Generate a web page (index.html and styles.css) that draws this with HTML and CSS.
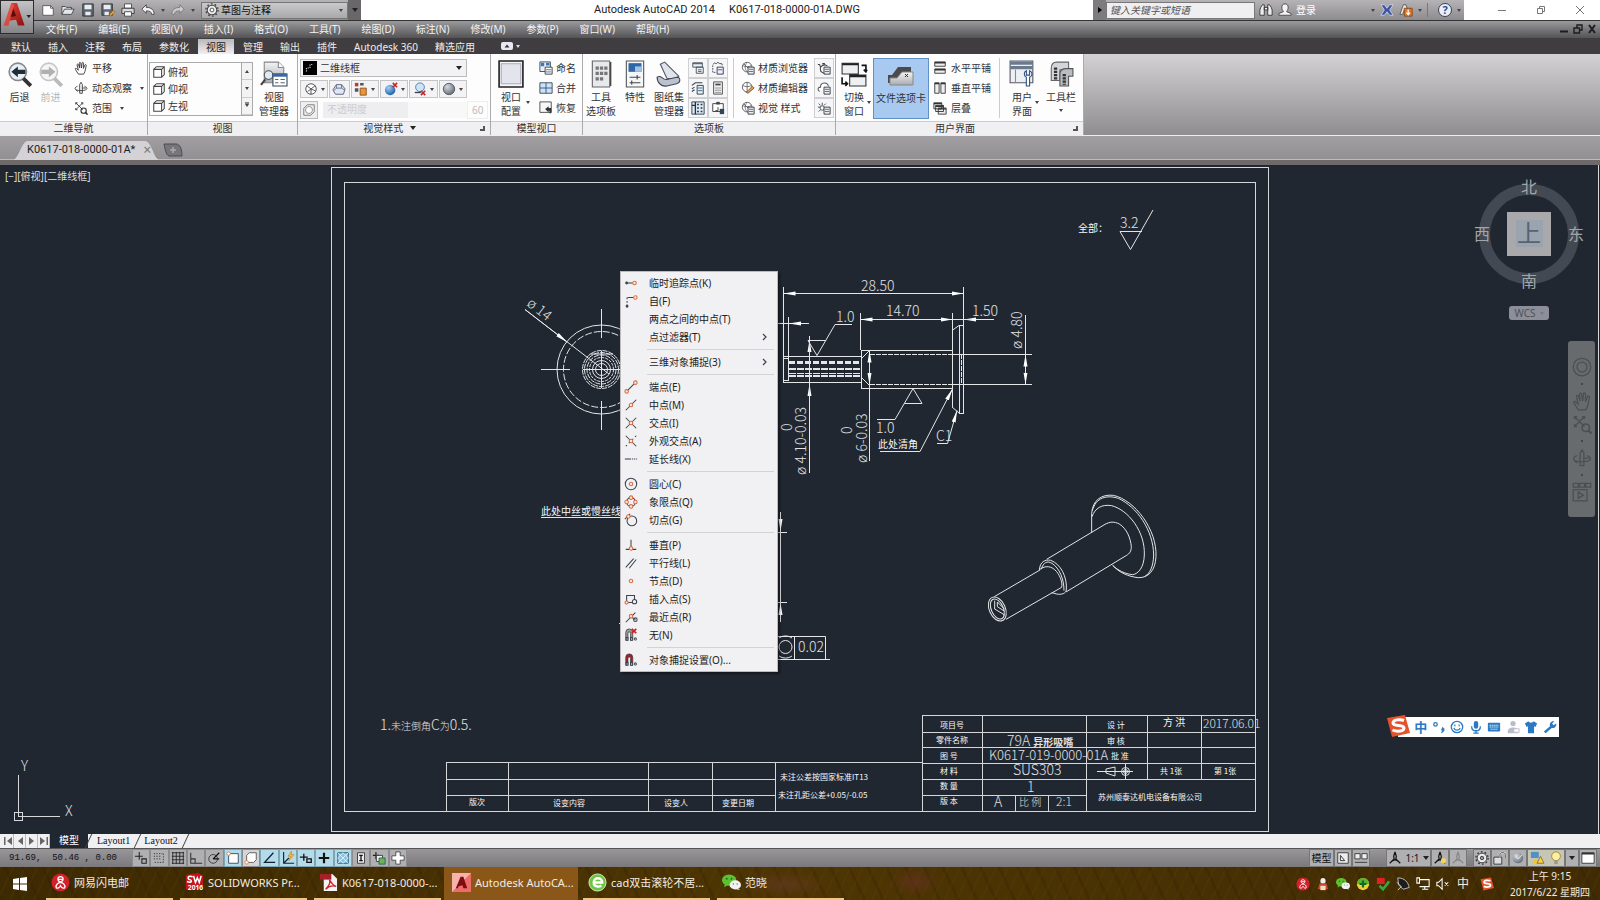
FILE: index.html
```html
<!DOCTYPE html>
<html lang="zh-CN">
<head>
<meta charset="utf-8">
<title>Autodesk AutoCAD 2014 K0617-018-0000-01A.DWG</title>
<link rel="stylesheet" href="styles.css">
</head>
<body>
<svg class="defs" aria-hidden="true">
  <defs>
    <linearGradient id="gGrey" x1="0" y1="0" x2="0" y2="1"><stop offset="0" stop-color="#f4f4f6"/><stop offset="1" stop-color="#a9abb0"/></linearGradient>
    <linearGradient id="gRed" x1="0" y1="0" x2="1" y2="1"><stop offset="0" stop-color="#ee4a3c"/><stop offset="1" stop-color="#8d0f10"/></linearGradient>
    <radialGradient id="gBlue" cx=".35" cy=".3" r=".8"><stop offset="0" stop-color="#9fd0f5"/><stop offset="1" stop-color="#1456a0"/></radialGradient>
    <radialGradient id="gBall" cx=".35" cy=".3" r=".8"><stop offset="0" stop-color="#d5dae0"/><stop offset="1" stop-color="#59636e"/></radialGradient>
    <marker id="arrow" markerUnits="userSpaceOnUse" markerWidth="14" markerHeight="8" refX="12" refY="3" orient="auto-start-reverse"><path d="M12 3 0 1V5Z" fill="#fff"/></marker>
    <symbol id="cube" viewBox="0 0 16 16"><path d="M2 5h9v9H2zM5 2h9v9M2 5l3-3M11 5l3-3M11 14l3-3" fill="#fff" stroke="#444" stroke-width="1.2"/></symbol>
    <symbol id="list" viewBox="0 0 16 16"><path d="M2 2h11v5H2zM6 7h8v7H6z" fill="#eef1f5" stroke="#444b55"/><path d="M2 3h11M8 10h4M8 12h4" stroke="#4d6f95" stroke-width="1.4"/></symbol>
    <symbol id="globe" viewBox="0 0 16 16"><circle cx="7" cy="7" r="5.500" fill="#fff" stroke="#555"/><path d="M2 5c3 2 7 2 10 0M7 1.500C4 5 4 9 7 12.500M3 3l8 8" stroke="#666" fill="none"/><path d="M8 7h7v8H8z" fill="#e8eef5" stroke="#333"/><path d="M9 9.500h5M9 12h5" stroke="#46698f"/></symbol>
    <symbol id="magnet" viewBox="0 0 16 16"><path d="M2 14V5a4 4 0 0 1 8 0v9H7.500V6a1.500 1.500 0 0 0-3 0v8Z" fill="currentColor" stroke="#333" stroke-width=".8"/><path d="M2.500 11h2v3h-2zM7.500 11h2v3h-2z" fill="#fff"/><circle cx="13" cy="12.500" r="1.200" fill="none" stroke="#555"/></symbol>
    <symbol id="hand" viewBox="0 0 16 16"><path d="M5 15 1.500 9.500c-.5-1 .8-1.700 1.500-.8L5 10.500 3.500 4.500c-.2-1 1.200-1.500 1.600-.4L6.500 8 6 2.500c0-1.200 1.500-1.200 1.700 0L8.500 8l.7-5.800c.2-1 1.500-.9 1.600.2L10.700 8.500 12.500 4.500c.5-1 1.700-.4 1.500.6L12.500 12l-1.500 3Z" fill="none" stroke="currentColor"/></symbol>
    <symbol id="extent" viewBox="0 0 16 16"><path d="M2 2l8 8M10 2 2 10M2 4V2h2M8 2h2v2M2 8v2h2" fill="none" stroke="currentColor"/><circle cx="11" cy="11" r="3" fill="none" stroke="currentColor" stroke-width="1.300"/><path d="m13 13 2.500 2.500" stroke="currentColor" stroke-width="1.800"/></symbol>
    <symbol id="orbit" viewBox="0 0 16 16"><path d="M6.500 14V4L8 1.500 9.500 4v10ZM4 6C-1 8 1 11 8 11s9-3 4-5M4 12l-2-2M9.500 8h4" fill="none" stroke="currentColor"/></symbol>
    <symbol id="scale" viewBox="0 0 16 16"><path d="M8 1 6.500 6 7 9 2 14M8 1l1.500 5L9 9l5 5M5 11.500c2-2 4-2 6 0" fill="none" stroke="currentColor" stroke-width="1.400"/></symbol>
    <symbol id="wechat" viewBox="0 0 20 18"><ellipse cx="7.500" cy="6.500" rx="7.500" ry="6" fill="#5cc32f"/><path d="m3 11-1 3 4-2Z" fill="#5cc32f"/><circle cx="5" cy="5" r="1" fill="#264"/><circle cx="10" cy="5" r="1" fill="#264"/><ellipse cx="14" cy="11.500" rx="6" ry="4.800" fill="#f3f3f3"/><path d="m17 15 2 2-4-1Z" fill="#eee"/><circle cx="12" cy="10.500" r=".8" fill="#777"/><circle cx="16" cy="10.500" r=".8" fill="#777"/></symbol>
    <symbol id="mail" viewBox="0 0 18 18"><circle cx="9" cy="9" r="8.500" fill="#d3212b"/><path d="M9 3.500c-3 0-3.500 4 0 5 3.500-1 3-5 0-5ZM5 14c-1-3 2-5 4-5s5 2 4 5c-1 1-3 0-4-2-1 2-3 3-4 2ZM7 6h4" stroke="#fff" stroke-width="1.200" fill="none"/></symbol>
    <symbol id="sogou" viewBox="0 0 24 22"><path d="m1 3 18-3 5 18-18 4Z" fill="#e5532b"/><path d="M18 5.500C14 4 7 4.500 7 8c0 4 11 1 11 5 0 3.500-7 4-11.500 2" stroke="#fff" stroke-width="3" fill="none"/></symbol>
  </defs>
</svg>

<header class="title-bar">
  <button class="app-button" aria-label="应用程序菜单">
    <svg viewBox="0 0 34 34"><path d="M3 26 11 2h6l8 24h-7l-2-6-7 1-1 5Z" fill="url(#gRed)"/><path d="m13 8-3 9 6-1Z" fill="#5d0a0a"/><path d="M3 26 11 2l3 2-6 22Z" fill="#f26a5b" opacity=".5"/><path d="M27 15h5l-2.500 3Z" fill="#222"/></svg>
  </button>
  <div class="quick-access">
    <button aria-label="新建"><svg viewBox="0 0 16 16"><path d="M2 3h9l3 3v8H2z" fill="#fff" stroke="#555"/><path d="M11 3v3h3" fill="none" stroke="#555"/></svg></button>
    <button aria-label="打开"><svg viewBox="0 0 16 16"><path d="M1 13V4h4l1 1h6v2M1 13 4 7h11l-3 6Z" fill="#e2e6ea" stroke="#444"/></svg></button>
    <button aria-label="保存"><svg viewBox="0 0 16 16"><path d="M2 1h12v14H2z" fill="#5d6672" stroke="#333"/><path d="M4 2h8v5H4zM5 10h6v4H5z" fill="#e9edf1"/></svg></button>
    <button aria-label="另存为"><svg viewBox="0 0 16 16"><path d="M1 1h12v13H1z" fill="#5d6672" stroke="#333"/><path d="M3 2h8v5H3zM4 10h5v4H4z" fill="#e9edf1"/><path d="m9 14 5-6 2 2-5 5Z" fill="#eba13a" stroke="#7a4a11" stroke-width=".6"/></svg></button>
    <button aria-label="打印"><svg viewBox="0 0 16 16"><path d="M4 1h8v5H4z" fill="#fff" stroke="#444"/><path d="M1 6h14v6H1z" fill="#d5d8dc" stroke="#333"/><path d="M4 10h8v5H4z" fill="#fff" stroke="#444"/></svg></button>
    <button aria-label="放弃"><svg viewBox="0 0 16 16"><path d="m1 7 5-5v3c6 0 9 3 9 8h-3c0-3-2-4-6-4v3Z" fill="#f2f2f2" stroke="#444"/></svg></button>
    <i class="caret"></i>
    <button aria-label="重做"><svg viewBox="0 0 16 16"><path d="m15 7-5-5v3C4 5 1 8 1 13h3c0-3 2-4 6-4v3Z" fill="#c9c9cb" stroke="#777"/></svg></button>
    <i class="caret"></i>
    <label class="workspace">
      <svg viewBox="0 0 16 16"><circle cx="8" cy="8" r="5.500" fill="#eee" stroke="#444" stroke-width="1.200"/><circle cx="8" cy="8" r="7" fill="none" stroke="#444" stroke-width="1.500" stroke-dasharray="2 2.400"/><circle cx="8" cy="8" r="2.200" fill="#fff" stroke="#444"/></svg>
      <select aria-label="工作空间"><option>草图与注释</option></select>
      <i class="caret"></i>
    </label>
    <button class="qat-more" aria-label="自定义"><i class="caret dark"></i></button>
  </div>
  <div class="caption"><span>Autodesk AutoCAD 2014</span><span>K0617-018-0000-01A.DWG</span></div>
  <div class="info-center">
    <button class="info-toggle" aria-label="展开"><svg viewBox="0 0 8 8"><path d="M2 1v6l4-3Z"/></svg></button>
    <input type="text" aria-label="搜索" placeholder="键入关键字或短语">
    <button aria-label="搜索"><svg viewBox="0 0 16 16"><path d="M2 5 4 2h2v12H1V8ZM14 5l-2-3h-2v12h5V8ZM6 5h4v3H6Z" fill="#e9ecef" stroke="#333"/></svg></button>
    <button class="sign-in"><svg viewBox="0 0 16 16"><path d="M8 1c5 0 4 7 2 8v1l5 2v2H1v-2l5-2V9C4 8 3 1 8 1Z" fill="#f3f3f3" stroke="#444"/></svg>登录</button>
    <i class="caret push"></i>
    <button aria-label="Exchange"><svg viewBox="0 0 16 16"><path d="M1 2h4l3 4 3-4h4l-4 6 4 6h-4l-3-4-3 4H1l4-6Z" fill="#3b55a4" stroke="#e5e8f5" stroke-width=".8"/></svg></button>
    <button aria-label="通知"><svg viewBox="0 0 16 16"><path d="M1 13 5 2h3l2 6H6l-2 5Z" fill="#e8e8ea" stroke="#555"/><path d="M6 6h9v9H6z" fill="#e0782a" stroke="#8c4510"/><path d="M10.500 7.500v6m-2-2.500 2 2.500 2-2.500" stroke="#fff" fill="none" stroke-width="1.300"/></svg></button>
    <i class="caret"></i>
    <i class="divider"></i>
    <button aria-label="帮助" class="help">?</button>
    <i class="caret"></i>
  </div>
  <div class="window-buttons">
    <button aria-label="最小化"><svg viewBox="0 0 10 10"><path d="M1 5.500h8"/></svg></button>
    <button aria-label="还原"><svg viewBox="0 0 10 10"><path d="M1.500 3.500h5v5h-5zM3.500 3V1.500h5v5H7"/></svg></button>
    <button aria-label="关闭"><svg viewBox="0 0 10 10"><path d="m1 1 8 8M9 1 1 9"/></svg></button>
  </div>
</header>

<nav class="menu-bar">
  <a href="#">文件(F)</a><a href="#">编辑(E)</a><a href="#">视图(V)</a><a href="#">插入(I)</a><a href="#">格式(O)</a><a href="#">工具(T)</a><a href="#">绘图(D)</a><a href="#">标注(N)</a><a href="#">修改(M)</a><a href="#">参数(P)</a><a href="#">窗口(W)</a><a href="#">帮助(H)</a>
  <div class="doc-buttons">
    <button aria-label="最小化文档"><svg viewBox="0 0 10 10"><path d="M1 7.500h8" stroke-width="2"/></svg></button>
    <button aria-label="还原文档"><svg viewBox="0 0 10 10"><path d="M1 4h5.500v5H1zM4 3.500V1h5v5H7" stroke-width="1.400"/></svg></button>
    <button aria-label="关闭文档"><svg viewBox="0 0 10 10"><path d="m2 1 6 8M8 1 2 9" stroke-width="2"/></svg></button>
  </div>
</nav>

<nav class="ribbon-tabs">
  <a href="#">默认</a><a href="#">插入</a><a href="#">注释</a><a href="#">布局</a><a href="#">参数化</a><a href="#" class="active">视图</a><a href="#">管理</a><a href="#">输出</a><a href="#">插件</a><a href="#">Autodesk 360</a><a href="#">精选应用</a>
  <button class="ribbon-min" aria-label="最小化功能区"><svg viewBox="0 0 20 10"><rect x="0" y="1" width="12" height="8" rx="2" fill="#e8e8f2"/><path d="M3.500 6.500 6 3.500l2.500 3Z" fill="#333"/><path d="M15 4h4l-2 3Z" fill="#ddd"/></svg></button>
</nav>

<main class="ribbon">
  <section class="panel p-nav">
    <div class="panel-body">
      <button class="big"><svg viewBox="0 0 24 24"><circle cx="10" cy="10" r="8" fill="#e6f0f6" stroke="#888" stroke-width="1.500"/><path d="m15 16 7 7" stroke="#333" stroke-width="3.500"/><path d="m4 10 6-5v3h7v4h-7v3Z" fill="#222b38"/></svg><span>后退</span></button>
      <button class="big off"><svg viewBox="0 0 24 24"><circle cx="10" cy="10" r="8" fill="#f5f5f5" stroke="#c6c6c6" stroke-width="1.500"/><path d="m15 16 7 7" stroke="#bbb" stroke-width="3.500"/><path d="m16 10-6-5v3H3v4h7v3Z" fill="#b0b0b0"/></svg><span>前进</span></button>
      <div class="rows nav-rows">
        <button><svg><use href="#hand"/></svg>平移</button>
        <button><svg><use href="#orbit"/></svg>动态观察<i class="caret"></i></button>
        <button><svg><use href="#extent"/></svg>范围<i class="caret"></i></button>
      </div>
    </div>
    <h2>二维导航</h2>
  </section>
  <section class="panel p-view">
    <div class="panel-body">
      <div class="view-list">
        <div class="rows">
          <button><svg><use href="#cube"/></svg>俯视</button>
          <button><svg><use href="#cube"/></svg>仰视</button>
          <button><svg><use href="#cube"/></svg>左视</button>
        </div>
        <div class="spin">
          <button aria-label="上"><i class="caret up"></i></button>
          <button aria-label="下"><i class="caret"></i></button>
          <button aria-label="更多"><i class="caret line"></i></button>
        </div>
      </div>
      <button class="big"><svg viewBox="0 0 24 24"><path d="M3 1h13l5 5v14H3z" fill="url(#gGrey)" stroke="#888"/><path d="M16 1v5h5" fill="#fff" stroke="#888"/><circle cx="7" cy="13" r="4" fill="#dcebf5" stroke="#555"/><path d="m4 17-4 5" stroke="#444" stroke-width="2"/><path d="M11 12h13v11H11z" fill="#fff" stroke="#345"/><path d="M11 13h13" stroke="#3a67a0" stroke-width="3"/><path d="M13 17h3m2 0h4m-9 3h3m2 0h4" stroke="#567"/></svg><span>视图<br>管理器</span></button>
    </div>
    <h2>视图</h2>
  </section>
  <section class="panel p-style">
    <div class="panel-body style-body">
      <label class="style-select"><svg viewBox="0 0 12 12"><path d="M0 0h12v12H0z"/><path d="M3 9V6h3V3h3" stroke="#ccc" fill="none" stroke-dasharray="1 1"/></svg><select aria-label="视觉样式"><option>二维线框</option></select><i class="caret dark"></i></label>
      <div class="strip">
        <button aria-label="无阴影"><svg viewBox="0 0 16 16"><circle cx="8" cy="8" r="6" fill="#fff" stroke="#444"/><path d="m8 8 5-4M8 8 3 4m5 4v6M4 11l4-3 5 2" stroke="#444" fill="none"/></svg><i class="caret"></i></button>
        <button aria-label="X 射线"><svg viewBox="0 0 16 16"><path d="M1 9 5 3h6l4 5-2 6H4Z" fill="#dde9f1" stroke="#557"/><path d="M5 3v4h6V3M5 7l-3 3M11 7l3 2" stroke="#668" fill="none"/></svg></button>
        <button aria-label="材质"><svg viewBox="0 0 16 16"><path d="M1 1h4v4H1z" fill="#c33"/><path d="M7 1h4v3H7zM1 7h4v4H1z" fill="#555"/><path d="M7 7h7v8H7z" fill="#e8963c" stroke="#8a4c12"/></svg><i class="caret"></i></button>
        <button aria-label="光源"><svg viewBox="0 0 16 16"><circle cx="7" cy="9" r="6" fill="url(#gBlue)"/><path d="m10 1 5 5m0-5-5 5" stroke="#c22" stroke-width="1.800"/></svg><i class="caret"></i></button>
        <button aria-label="背景"><svg viewBox="0 0 16 16"><circle cx="8" cy="6" r="5" fill="#cfe3f3" stroke="#3f78ab"/><path d="M2 12h7" stroke="#345" stroke-width="1.500"/><path d="m9 10 5 5m0-5-5 5" stroke="#c22" stroke-width="1.800"/></svg><i class="caret"></i></button>
        <button aria-label="面样式"><svg viewBox="0 0 16 16"><circle cx="8" cy="8" r="6.500" fill="url(#gBall)" stroke="#555"/></svg><i class="caret"></i></button>
      </div>
      <div class="opacity">
        <button aria-label="不透明度"><svg viewBox="0 0 16 16"><path d="M2 6 6 2h8v8l-4 4H2z" fill="#eee" stroke="#777"/><circle cx="8" cy="8" r="4" fill="#fff" stroke="#888"/></svg></button>
        <span class="track">不透明度</span><span class="value">60</span>
      </div>
    </div>
    <h2>视觉样式 <i class="caret dark"></i><i class="corner"></i></h2>
  </section>
  <section class="panel p-port">
    <div class="panel-body">
      <button class="big"><svg viewBox="0 0 24 24"><path d="M1 0h22v24H1z" fill="#f4f5f9" stroke="#222" stroke-width="1.500"/><path d="M3 2.500h18V21H3z" fill="#e4e5ec" stroke="#aab"/></svg><span>视口<br>配置</span></button>
      <i class="caret mid"></i>
      <div class="rows">
        <button><svg viewBox="0 0 16 16"><path d="M1 1h12v11H1z" fill="#e9f1f8" stroke="#345"/><path d="M2 2h4v4H2zM8 2h4v3H8z" fill="#3c78b4"/><path d="M7 7h8v8H7z" fill="#fff" stroke="#333"/><path d="M8 10h6M8 12.500h6" stroke="#46698f"/></svg>命名</button>
        <button><svg viewBox="0 0 16 16"><path d="M1 2h14v12H1z" fill="#cfe2f3" stroke="#345"/><path d="M8 2v12M1 8h14" stroke="#27518a"/></svg>合并</button>
        <button><svg viewBox="0 0 16 16"><path d="M1 1h13v12H1z" fill="#f4f6f8" stroke="#444"/><path d="m7 9 4-3v2h3v6h-2v-3h-1v2Z" fill="#333"/></svg>恢复</button>
      </div>
    </div>
    <h2>模型视口</h2>
  </section>
  <section class="panel p-palette">
    <div class="panel-body">
      <button class="big"><svg viewBox="0 0 24 24"><path d="M4 0h16v24H4z" fill="#e7e9ec" stroke="#666"/><path d="M7 5h3v3H7zM11 5h3v3h-3zM15 5h3v3h-3zM7 10h3v3H7zM11 10h3v3h-3zM15 10h3v3h-3zM7 15h3v3H7zM11 15h3v3h-3z" fill="#777"/><path d="M21 1v22" stroke="#222"/></svg><span>工具<br>选项板</span></button>
      <button class="big"><svg viewBox="0 0 24 24"><path d="M4 0h16v24H4z" fill="#f4f6f8" stroke="#555"/><path d="M6 2h12v8H6z" fill="#2f66a6"/><path d="M12 5h6v5h-6z" fill="#9fc3e6"/><path d="M7 15h10M7 20h10M14 13v4M9 18v4" stroke="#444"/></svg><span>特性</span></button>
      <button class="big"><svg viewBox="0 0 24 24"><path d="m4 3 4-2 13 13-4 3-7-1Z" fill="#dfe4ea" stroke="#556"/><path d="M1 15c4-3 5 3 9 2l9-2c4 0 4 5 0 6l-9 2C5 24 1 20 1 15Z" fill="#b9c2cd" stroke="#445"/></svg><span>图纸集<br>管理器</span></button>
      <div class="tiles two">
        <button aria-label="命令行"><svg><use href="#list"/></svg></button>
        <button aria-label="标记集"><svg viewBox="0 0 16 16"><path d="M2 4q2-3 4-1 2-3 4 0 3-1 3 2" fill="none" stroke="#345"/><path d="M2 5v8h4" stroke="#345" fill="none" stroke-dasharray="2 1"/><path d="M7 7h7v8H7z" fill="#eef" stroke="#333"/><path d="M8 10h5" stroke="#368"/></svg></button>
        <button aria-label="图层"><svg viewBox="0 0 16 16"><path d="m1 5 4-3h8M1 9l3-2M1 12l3-2" stroke="#345" fill="none" stroke-width="1.300"/><path d="M7 5h7v10H7z" fill="#e5edf6" stroke="#333"/><path d="M8 8h5M8 11h5" stroke="#368"/></svg></button>
        <button aria-label="计算器"><svg viewBox="0 0 16 16"><path d="M3 1h10v14H3z" fill="#f0f0f0" stroke="#444"/><path d="M5 4h6" stroke="#444" stroke-width="2"/><path d="M5 8h6M5 10.500h6M5 13h6" stroke="#555" stroke-dasharray="1.500 .8"/></svg></button>
        <button aria-label="设计中心"><svg viewBox="0 0 16 16"><path d="M1 1h14v14H1z" fill="#dfeaf5" stroke="#234"/><path d="M5 1v14M1 5h4M7 4h2m2 0h2M7 8h2m2 0h2M7 12h2m2 0h2" stroke="#234" stroke-width="1.500"/></svg></button>
        <button aria-label="参照"><svg viewBox="0 0 16 16"><path d="M2 3h12v9H2z" fill="#fff" stroke="#333"/><path d="M6 1h4v3H6z" fill="#444"/><path d="M8 7v4H5" stroke="#333" fill="none"/><path d="M10 9h5v6h-5z" fill="#345"/></svg></button>
      </div>
      <i class="vline"></i>
      <div class="rows material">
        <button><svg><use href="#globe"/></svg>材质浏览器</button>
        <button><svg viewBox="0 0 16 16"><circle cx="7" cy="7" r="5.500" fill="#fff" stroke="#555"/><path d="M2 5c3 2 7 2 10 0M7 1.500v11" stroke="#666" fill="none"/><path d="m6 13 7-7 2 2-7 6Z" fill="#e7a23d" stroke="#754"/></svg>材质编辑器</button>
        <button><svg><use href="#globe"/></svg>视觉 样式</button>
      </div>
      <div class="tiles">
        <button aria-label="渲染"><svg viewBox="0 0 16 16"><path d="M1 4h2l1 3c3-3 6-3 8-1M4 7c-1 4 0 6 4 7M6 3h3" stroke="#444" fill="none" stroke-width="1.200"/><path d="M8 7h7v8H8z" fill="#e8eef5" stroke="#333"/><path d="M9 9.500h5M9 12h5" stroke="#46698f"/></svg></button>
        <button aria-label="环境"><svg viewBox="0 0 16 16"><path d="M3 12c-3-2-2-5 1-5 0-6 8-6 9-1" stroke="#555" fill="#fff" stroke-width="1.200"/><path d="M8 7h7v8H8z" fill="#e8eef5" stroke="#333"/><path d="M9 9.500h5M9 12h5" stroke="#46698f"/></svg></button>
        <button aria-label="阳光"><svg viewBox="0 0 16 16"><path d="M6 2v3M1 7h3M2 3l2 2M10 3 8 5M2 12l2-2" stroke="#444"/><circle cx="6" cy="8" r="2.500" fill="#fff" stroke="#444"/><path d="M8 7h7v8H8z" fill="#e8eef5" stroke="#333"/><path d="M9 9.500h5M9 12h5" stroke="#46698f"/></svg></button>
      </div>
    </div>
    <h2>选项板</h2>
  </section>
  <section class="panel p-ui">
    <div class="panel-body">
      <button class="big"><svg viewBox="0 0 24 24"><path d="M1 2h15v10H1zM8 13h15v10H8z" fill="#eef0f3" stroke="#333"/><path d="M1 3h15M8 14h15" stroke="#222" stroke-width="2"/><path d="M19 4h4v6m-2-2 2 2 1-2M1 15v6h5m-2-2 2 2-2 2" stroke="#111" fill="none" stroke-width="1.500"/></svg><span>切换<br>窗口</span></button>
      <i class="caret mid"></i>
      <button class="big pressed"><svg viewBox="0 0 26 24"><path d="M0 20V12h4L10 4h13v16Z" fill="#4b4b4f"/><path d="M2 22v-7h7l5-6h11v13Z" fill="url(#gGrey)" stroke="#888"/><path d="m17 11 3 3m0-3-3 3" stroke="#333"/></svg><span>文件选项卡</span></button>
      <div class="rows">
        <button><svg viewBox="0 0 16 16"><path d="M2 1h12v5H2zM2 9h12v5H2z" fill="#eee" stroke="#333"/><path d="M2 2h12M2 10h12" stroke="#333" stroke-width="1.500"/></svg>水平平铺</button>
        <button><svg viewBox="0 0 16 16"><path d="M2 2h5v12H2zM9 2h5v12H9z" fill="#eee" stroke="#333"/><path d="M2 3h5m2 0h5" stroke="#333" stroke-width="1.500"/></svg>垂直平铺</button>
        <button><svg viewBox="0 0 16 16"><path d="M1 2h9v7H1zM3 5h9v7H3zM6 8h9v7H6z" fill="#eee" stroke="#333"/><path d="M1 3h9M3 6h9M6 9h9" stroke="#333" stroke-width="1.500"/></svg>层叠</button>
      </div>
      <i class="vline"></i>
      <button class="big"><svg viewBox="0 0 24 24"><path d="M1 0h21v20H1z" fill="#edf0f3" stroke="#556"/><path d="M1 2h21M1 6h21" stroke="#6a7a8c" stroke-width="3"/><path d="M6 8v12" stroke="#889"/><path d="M16 23v-8c-3-2-2-5 0-6v4h3V9c3 1 3 5 0 6v8Z" fill="#fff" stroke="#2c4f80"/></svg><span>用户<br>界面</span></button>
      <i class="caret mid"></i>
      <button class="big"><svg viewBox="0 0 24 24"><path d="M19 1H8C4 1 3 4 3 7v11h8V8h8Z" fill="#d3d5d9" stroke="#666"/><path d="M23 7h-6c-4 0-6 2-6 5v11h8V14h4Z" fill="#b9bcc1" stroke="#555"/><path d="M7 6v11M15 12v10" stroke="#333" stroke-width="3" stroke-dasharray="2 1"/></svg><span>工具栏</span><i class="caret"></i></button>
    </div>
    <h2>用户界面<i class="corner"></i></h2>
  </section>
</main>

<div class="file-tabs">
  <div class="file-tab"><svg class="tab-shape" viewBox="0 0 146 20" preserveAspectRatio="none"><path d="M0 20C6 18 8 3 14 1h118c7 1 8 16 14 19Z" fill="#d4d2d4"/></svg><a href="#">K0617-018-0000-01A*</a><button aria-label="关闭图形">×</button></div>
  <button class="new-tab" aria-label="新图形"><svg viewBox="0 0 20 14"><path d="M1 1h12c4 0 6 5 6 12H6C3 12 2 6 1 1Z" fill="#77757a" stroke="#4c4b4d"/><path d="M10 4v6M7 7h6" stroke="#aaa" stroke-width="1.500"/></svg></button>
</div>

<div class="canvas">
  <svg class="drawing" viewBox="0 165 1600 669">
    <g class="frame">
      <path d="M331.500 167.500H1268.500V831.500H331.500ZM344.500 182.500H1255.500V811.500H344.500Z"/>
      <path d="M446.500 811V762.500H922.500M446.500 779.500H775.500M446.500 795.500H775.500M508.500 762V811M648.500 762V811M712.500 762V811M775.500 762V811"/>
      <path d="M922.500 811V715.500H1255M922.500 732.500H1255M922.500 747.500H1255M922.500 763.500H1255M922.500 779.500H1255M922.500 795.500H1086.500M982.500 715V811M1086.500 715V811M1147.500 715V779M1201.500 715V779M1015.500 795V811M1048.500 795V811"/>
      <path d="M18.500 775V816.500H60M14.500 812.500h8v8h-8z"/>
    </g>
    <!-- end view -->
    <g class="line">
      <circle cx="601.500" cy="369.500" r="44.500"/>
      <circle cx="601.500" cy="369.500" r="38" stroke-dasharray="7 2"/>
      <g stroke-dasharray="5 1"><circle cx="601.500" cy="369.500" r="19"/><circle cx="601.500" cy="369.500" r="17"/><circle cx="601.500" cy="369.500" r="14.500"/></g>
      <circle cx="601.500" cy="369.500" r="12" stroke-dasharray="3 1"/><circle cx="601.500" cy="369.500" r="9"/><circle cx="601.500" cy="369.500" r="6"/>
      <path d="M601.500 309v29M601.500 351v37M601.500 401v29M541 369.500h29M583 369.500h37M590 354h23"/>
      <path d="M525 309.500 609 374"/><path d="M525 309.500 567 342" marker-end="url(#arrow)"/>
      <path d="M541 517.500h85M619 624l4-4"/>
    </g>
    <!-- side view -->
    <g class="line crisp">
      <path d="M783.500 287V382.500H861M783 356.500h78M788.500 317V381M783 358.500h6M783 380.500h6M963.500 287V413.500H959.500V325.500H963.500M860.500 313V350M861.500 350.500V388.500H952.500M861 350.500H952M952.500 313V407M952 354.500H1032M952 384.500H1032"/>
      <path d="M789 362.500h72" stroke-width="3" stroke-dasharray="6 2"/><path d="M789 369h72M789 375.500h72" stroke-width="2" stroke-dasharray="7 1"/><path d="M789 373.500h72" stroke-width="1" stroke-dasharray="7 1"/>
      <path d="M870 354.500h82M870 384.500h82M961.500 354v30" stroke-dasharray="5 1"/>
    </g>
    <g class="line">
      <path d="m861 359 8-8M861 377l8 8M952 330.500l7-5M952 407l7 6"/>
      <g marker-end="url(#arrow)"><path d="M870 293.500H963.500"/><path d="M870 293.500H783.500"/><path d="M900 319.500H860.500"/><path d="M900 319.500H952.500"/><path d="M994 319.500H964"/><path d="M809 323.500H789"/><path d="M869.500 365V350.500"/><path d="M869.500 365V385"/><path d="M1025.500 369V354.500"/><path d="M1025.500 369V384.500"/><path d="M809.500 400V384"/><path d="M809.500 360V340"/><path d="M920 451.500 952.500 389"/><path d="m947.500 443.500 9.500-33"/><path d="M780.500 512V531"/><path d="M780.500 622V603"/></g>
      <path d="M952 319.500h20M777 323.500h13M1025.500 315v40M869.500 385v76M809.500 336V473M808 340.500h18M808 340.500l9 15 18-31h17M904 403.500h18l-9-15-18 31H877M880 451.500h40M937 443.500h10.500"/>
      <path d="m1120 231.500 10.500 18L1153 210M1120 231.500h22"/>
      <path d="M780.500 530v75M777 532.500h10M777 602.500h10M777 636.500H825.500V659M794.500 636v23M777 659.500h53"/><circle cx="785.500" cy="647" r="6.500"/><path d="M779 638a11 11 0 0 1 13 0M779 656a11 11 0 0 0 13 0"/>
      <path d="M1097 771.500h36M1125.500 764v15M1115 767v9l-9-3v-4Z"/><circle cx="1125.500" cy="771.500" r="4"/><circle cx="1125.500" cy="771.500" r="2"/>
    </g>
    <!-- isometric view -->
    <g class="line iso" transform="translate(960 480) scale(.3333)">
      <path d="M395 158V100C398 60 425 42 460 46 525 60 592 150 588 230 586 272 565 294 535 293 505 290 478 278 458 256M397 92C408 52 440 44 475 55 530 80 580 150 581 225 580 260 570 280 555 289"/>
      <path d="M396 110C405 85 425 72 455 77 505 90 556 155 553 225 552 262 535 282 518 284 495 282 472 270 458 256M500 226C508 221 514 215 514 200 512 175 500 145 478 132 462 124 450 125 435 133L260 238"/>
      <path d="M238 270C240 245 255 238 272 241 302 252 322 290 319 330 318 340 305 345 290 342L275 338M244 268C250 246 262 242 276 250 298 265 312 295 312 332M240 268C255 256 275 257 290 275 302 290 308 310 305 322L138 418M103 350 240 270M318 336 500 226"/>
      <ellipse cx="112" cy="387" rx="24" ry="38" transform="rotate(-24 112 387)"/><ellipse cx="112" cy="387" rx="18" ry="32" transform="rotate(-24 112 387)"/><path d="M104 362v25l30 18M112 366l22 22M112 366v14l22 14"/>
    </g>
    <g class="cad">
      <text x="861" y="291">28.50</text><text x="886" y="316">14.70</text><text x="972" y="316">1.50</text><text x="836" y="322">1.0</text><text x="876" y="433">1.0</text><text x="936" y="441">C1</text><text x="798" y="652">0.02</text><text x="1120" y="228">3.2</text>
      <text transform="translate(526 305) rotate(38)">ø 14</text>
      <text transform="translate(1022 349) rotate(-90)">ø 4.80</text>
      <text transform="translate(806 475) rotate(-90)">ø 4.10-0.03</text><text transform="translate(792 431) rotate(-90)">0</text>
      <text transform="translate(867 463) rotate(-90)">ø 6-0.03</text><text transform="translate(852 434) rotate(-90)">0</text>
      <text x="380" y="730">1.<tspan class="c10">未注倒角</tspan>C<tspan class="c10">为</tspan>0.5.</text>
      <text x="1007" y="746">79A <tspan class="c10 solid">异形吸嘴</tspan></text><text class="c13" x="989" y="760">K0617-019-0000-01A</text><text x="1013" y="775">SUS303</text><text x="1027" y="792">1</text><text x="994" y="807">A</text><text class="c10" x="1019" y="806">比 例</text><text class="c12" x="1056" y="806">2:1</text><text class="c12" x="1203" y="728">2017.06.01</text>
      <text x="21" y="771">Y</text><text x="65" y="816">X</text>
    </g>
    <g class="cjk">
      <text class="c10" x="541" y="515">此处中丝或慢丝线</text><text class="c10" x="878" y="448">此处清角</text><text class="c10" x="1078" y="232">全部：</text><text class="c10" x="1163" y="726">方 洪</text>
      <text x="469" y="805">版次</text><text x="553" y="806">设变内容</text><text x="664" y="806">设变人</text><text x="722" y="806">变更日期</text>
      <text x="780" y="780">未注公差按国家标准IT13</text><text x="778" y="798">未注孔距公差+0.05/-0.05</text>
      <text x="940" y="728">项目号</text><text x="936" y="743">零件名称</text><text x="940" y="759">图 号</text><text x="940" y="774">材 料</text><text x="940" y="789">数 量</text><text x="940" y="804">版 本</text>
      <text x="1107" y="728">设 计</text><text x="1107" y="744">审 核</text><text x="1111" y="759">批 准</text><text x="1160" y="774">共 1张</text><text x="1214" y="774">第 1张</text><text x="1098" y="800">苏州顺泰达机电设备有限公司</text>
    </g>
  </svg>
  <div class="view-label"><button>[−]</button><button>[俯视]</button><button>[二维线框]</button></div>

  <svg class="view-cube" viewBox="0 0 114 114"><circle cx="57" cy="57" r="44.500"/><rect x="35" y="35" width="44" height="44"/><rect class="tint" x="44" y="43" width="27" height="27"/><text x="57" y="65" class="face">上</text><text x="57" y="16">北</text><text x="10" y="63">西</text><text x="104" y="63">东</text><text x="57" y="110">南</text></svg>
  <button class="wcs">WCS <i class="caret"></i></button>
  <div class="nav-bar">
    <button class="more" aria-label="全导航控制盘"><svg viewBox="0 0 16 16"><circle cx="8" cy="8" r="7" fill="none" stroke="currentColor"/><circle cx="8" cy="8" r="4" fill="none" stroke="currentColor"/></svg></button>
    <button aria-label="平移"><svg><use href="#hand"/></svg></button>
    <button class="more near" aria-label="范围缩放"><svg><use href="#extent"/></svg></button>
    <button class="more" aria-label="动态观察"><svg><use href="#orbit"/></svg></button>
    <button aria-label="ShowMotion"><svg viewBox="0 0 16 16"><path d="M1 1h4v3H1zM6 1h4v3H6zM11 1h4v3h-4zM1 6h11v9H1zM5 8v5l4-2.500Z" fill="none" stroke="currentColor"/></svg></button>
  </div>

  <div class="ime">
    <svg class="ime-logo"><use href="#sogou"/></svg>
    <button>中</button>
    <button aria-label="标点"><svg viewBox="0 0 16 16"><circle cx="4" cy="5" r="2" fill="none" stroke="currentColor" stroke-width="1.500"/><path d="M12 8.500c3 1 2 5-1 6 1-2 1-2 0-3Z" fill="currentColor" stroke="currentColor"/></svg></button>
    <button aria-label="表情"><svg viewBox="0 0 16 16"><circle cx="8" cy="8" r="6.500" fill="none" stroke="currentColor" stroke-width="1.500"/><path d="M5.500 5v2M10.500 5v2M4.500 9c1 3.500 6 3.500 7 0" fill="none" stroke="currentColor" stroke-width="1.400"/></svg></button>
    <button aria-label="语音"><svg viewBox="0 0 16 16"><rect x="5.500" y="1" width="5" height="9" rx="2.500" fill="currentColor"/><path d="M3 7c0 7 10 7 10 0M8 12v3M5 15h6" fill="none" stroke="currentColor" stroke-width="1.500"/></svg></button>
    <button aria-label="软键盘"><svg viewBox="0 0 16 16"><rect x="1" y="3" width="14" height="10" rx="1" fill="currentColor"/><path d="M3 6h10M3 8h10M4 10.500h8" stroke="#fff" stroke-dasharray="1.500 .7"/></svg></button>
    <button aria-label="登录" class="dim"><svg viewBox="0 0 16 16"><circle cx="8" cy="4" r="3" fill="currentColor"/><path d="M2 13c0-6 12-6 12 0v2H2Z" fill="currentColor"/><path d="M9 10h6v4H9z" fill="#fff" stroke="currentColor"/></svg></button>
    <button aria-label="皮肤"><svg viewBox="0 0 16 16"><path d="M1 4 5 1.500c1 2 5 2 6 0L15 4l-2 4-1.500-1V15h-7V7L3 8Z" fill="currentColor"/></svg></button>
    <button aria-label="工具箱"><svg viewBox="0 0 16 16"><path d="m1 13 7-6c-1-4 2-6 5-5.500L10.500 4 12 6l3-2c1 3-2 6-5 5l-7 6Z" fill="currentColor"/></svg></button>
  </div>

  <menu class="context">
    <li><button><svg viewBox="0 0 16 16"><path d="M3 8h7" /><circle cx="3" cy="8" r="1" fill="#333"/><circle class="o" cx="12" cy="8" r="2"/></svg>临时追踪点(K)</button></li>
    <li><button><svg viewBox="0 0 16 16"><path d="M4 4h7"/><path d="M3.500 4v10" stroke-dasharray="2 2"/><circle cx="3.500" cy="14" r="1" fill="#333"/><circle class="o" cx="13" cy="4" r="2"/></svg>自(F)</button></li>
    <li><button><svg></svg>两点之间的中点(T)</button></li>
    <li><button><svg></svg>点过滤器(T)<svg class="sub" viewBox="0 0 8 8"><path d="m2 1 3 3-3 3"/></svg></button></li>
    <li class="sep"></li>
    <li><button><svg></svg>三维对象捕捉(3)<svg class="sub" viewBox="0 0 8 8"><path d="m2 1 3 3-3 3"/></svg></button></li>
    <li class="sep"></li>
    <li><button><svg viewBox="0 0 16 16"><path d="m3 13 10-10"/><circle class="o" cx="3" cy="13" r="2"/><circle class="o" cx="13" cy="3" r="2"/></svg>端点(E)</button></li>
    <li><button><svg viewBox="0 0 16 16"><path d="M2 14 14 2"/><circle class="o" cx="8" cy="8" r="2"/></svg>中点(M)</button></li>
    <li><button><svg viewBox="0 0 16 16"><path d="M2 14 14 2M2 2l12 12"/><circle class="o" cx="8" cy="8" r="2"/></svg>交点(I)</button></li>
    <li><button><svg viewBox="0 0 16 16"><path d="M2 2l12 12"/><path d="M2 14 14 2" stroke-dasharray="2 3"/><circle class="o" cx="8" cy="8" r="2"/></svg>外观交点(A)</button></li>
    <li><button><svg viewBox="0 0 16 16"><path d="M1 8h7"/><path d="M9 8h6" stroke-dasharray="1.500 1"/></svg>延长线(X)</button></li>
    <li class="sep"></li>
    <li><button><svg viewBox="0 0 16 16"><circle cx="8" cy="8" r="6.500"/><circle class="o" cx="8" cy="8" r="2"/></svg>圆心(C)</button></li>
    <li><button><svg viewBox="0 0 16 16"><circle cx="8" cy="8" r="5"/><circle class="o" cx="8" cy="3" r="2"/><circle class="o" cx="8" cy="13" r="2"/><circle class="o" cx="3" cy="8" r="2"/><circle class="o" cx="13" cy="8" r="2"/></svg>象限点(Q)</button></li>
    <li><button><svg viewBox="0 0 16 16"><circle cx="9" cy="9" r="5.500"/><path d="M1 7 7 1"/><circle class="o" cx="5" cy="4" r="2"/></svg>切点(G)</button></li>
    <li class="sep"></li>
    <li><button><svg viewBox="0 0 16 16"><path d="M8 2v10M2 13h12"/><circle class="o" cx="8" cy="12" r="2"/></svg>垂直(P)</button></li>
    <li><button><svg viewBox="0 0 16 16"><path d="M2 13 11 3M6 14 14 4"/></svg>平行线(L)</button></li>
    <li><button><svg viewBox="0 0 16 16"><circle class="o" cx="8" cy="8" r="2"/></svg>节点(D)</button></li>
    <li><button><svg viewBox="0 0 16 16"><path d="M3 11V4h9v5"/><path d="M3 12h6"/><circle cx="12" cy="11" r="2.500"/><circle class="o" cx="3" cy="12" r="1.800"/></svg>插入点(S)</button></li>
    <li><button><svg viewBox="0 0 16 16"><path d="M2 14 13 3M8 8l5 3"/><circle class="o" cx="8" cy="7" r="2"/><circle cx="13" cy="11" r="2"/></svg>最近点(R)</button></li>
    <li><button><svg viewBox="0 0 16 16" color="#999"><use href="#magnet"/><path d="m9 1 5 5m0-5-5 5" stroke="#c22" stroke-width="2"/></svg>无(N)</button></li>
    <li class="sep"></li>
    <li><button><svg viewBox="0 0 16 16" color="#a8202a"><use href="#magnet"/></svg>对象捕捉设置(O)...</button></li>
  </menu>
</div>

<div class="layout-tabs">
  <button aria-label="首个"><svg viewBox="0 0 10 10"><path d="M1 1v8h1.500V1zM9 1v8L4 5Z"/></svg></button>
  <button aria-label="上一个"><svg viewBox="0 0 10 10"><path d="M8 1v8L3 5Z"/></svg></button>
  <button aria-label="下一个"><svg viewBox="0 0 10 10"><path d="M2 1v8l5-4Z"/></svg></button>
  <button aria-label="末个"><svg viewBox="0 0 10 10"><path d="M9 1v8H7.500V1zM1 1v8l5-4Z"/></svg></button>
  <a href="#" class="current">模型</a><a href="#">Layout1</a><a href="#">Layout2</a>
</div>

<div class="status-bar">
  <output>91.69,  50.46 , 0.00</output>
  <div class="toggles">
    <button aria-label="推断约束"><svg viewBox="0 0 16 16"><path d="M1 6h9M6 1v9M9 9h5v5H9z" stroke="#222" fill="none" stroke-width="1.200"/></svg></button>
    <button aria-label="捕捉"><svg viewBox="0 0 16 16"><path d="M2 3h10M2 6h8M2 9h8M13 3v10M3 13h10" stroke="#333" stroke-dasharray="1.500 1.500" fill="none"/></svg></button>
    <button aria-label="栅格"><svg viewBox="0 0 16 16"><path d="M1 2h14M1 6h14M1 10h14M1 14h14M2 1v14M6 1v14M10 1v14M14 1v14" stroke="#222"/></svg></button>
    <button aria-label="正交"><svg viewBox="0 0 16 16"><path d="M2 2v12h13M2 9h5v5" stroke="#333" fill="none" stroke-width="1.200"/></svg></button>
    <button aria-label="极轴"><svg viewBox="0 0 16 16"><circle cx="7" cy="9" r="5" stroke="#333" fill="none"/><path d="M7 9h7M7 9l7-7" stroke="#111" stroke-width="1.500"/></svg></button>
    <button class="on" aria-label="对象捕捉"><svg viewBox="0 0 16 16"><path d="M3 3h11v11H3z" fill="#fff" stroke="#345"/><circle cx="3" cy="3" r="2" fill="#fff" stroke="#e07b3c"/></svg></button>
    <button class="lite" aria-label="三维对象捕捉"><svg viewBox="0 0 16 16"><path d="M3 5 6 2h8v8l-3 3H3z" fill="#fff" stroke="#555"/><circle cx="3" cy="13" r="2" fill="#fff" stroke="#e07b3c"/></svg></button>
    <button class="on" aria-label="对象捕捉追踪"><svg viewBox="0 0 16 16"><path d="M13 2 3 13h12" stroke="#123" fill="none" stroke-width="1.500"/></svg></button>
    <button class="on" aria-label="动态 UCS"><svg viewBox="0 0 16 16"><path d="M3 1v13h12M3 14 9 8" stroke="#123" fill="none" stroke-width="1.300"/><path d="m12 0-4 6h3l-2 5 6-7h-3Z" fill="#f4b93a" stroke="#a66f13" stroke-width=".5"/></svg></button>
    <button class="on" aria-label="动态输入"><svg viewBox="0 0 16 16"><path d="M1 7h9M5.500 3v8M9 9h5v4H9z" stroke="#111" fill="none" stroke-width="1.500"/></svg></button>
    <button class="on" aria-label="线宽"><svg viewBox="0 0 16 16"><path d="M2 8h12M8 2v12" stroke="#111" stroke-width="2.500"/></svg></button>
    <button class="on" aria-label="透明度"><svg viewBox="0 0 16 16"><path d="M2 2h12v12H2z" fill="#8cc4e8" stroke="#256"/><path d="m2 8 6-6M2 14 14 2M8 14l6-6M2 8l6 6M2 2l12 12M8 2l6 6" stroke="#e4f3fb"/></svg></button>
    <button aria-label="快捷特性"><svg viewBox="0 0 16 16"><path d="M4 2h8v12H4z" fill="#eee" stroke="#333"/><path d="M6 5h4M6 11h4M8 5v6" stroke="#111" stroke-width="1.500"/></svg></button>
    <button aria-label="选择循环"><svg viewBox="0 0 16 16"><path d="M1 5h7M4.500 1v8" stroke="#222" stroke-width="1.300"/><path d="M5 5h7v7H5z" fill="#eee" stroke="#333"/><path d="M8 8h7v7H8z" fill="#6bb356" stroke="#265"/></svg></button>
    <button aria-label="注释监视器"><svg viewBox="0 0 16 16"><path d="M5.500 1h5v4.500H15v5h-4.500V15h-5v-4.500H1v-5h4.500Z" fill="#fff" stroke="#444"/></svg></button>
  </div>
  <div class="status-right">
    <button class="text">模型</button>
    <button aria-label="快速查看布局"><svg viewBox="0 0 16 16"><path d="M2 2h12v12H2z" fill="#eee" stroke="#333"/><path d="M5 5v6h5Z" fill="none" stroke="#222"/></svg></button>
    <button aria-label="快速查看图形"><svg viewBox="0 0 16 16"><path d="M1 3h6v6H1zM9 3h6v6H9zM1 13h14" fill="#eee" stroke="#333"/></svg></button>
    <button class="text anno"><svg><use href="#scale"/></svg>1:1 <i class="caret dark"></i></button>
    <button aria-label="注释可见性"><svg viewBox="0 0 16 16"><use href="#scale"/><circle cx="12" cy="11" r="3" fill="#f1d35d"/></svg></button>
    <button aria-label="自动添加比例" class="faded"><svg><use href="#scale"/></svg></button>
    <button class="apart" aria-label="切换工作空间"><svg viewBox="0 0 16 16"><circle cx="8" cy="8" r="5.500" fill="#eee" stroke="#333"/><circle cx="8" cy="8" r="7" fill="none" stroke="#333" stroke-width="1.500" stroke-dasharray="2 2.400"/><circle cx="8" cy="8" r="2" fill="#999" stroke="#333"/></svg></button>
    <button aria-label="锁定"><svg viewBox="0 0 16 16"><path d="M1 7h9v8H1z" fill="#ddd" stroke="#333"/><path d="M8 7V4c0-3 6-3 6 0v4" stroke="#eee" stroke-width="2" fill="none"/><path d="M8 7V4c0-3 6-3 6 0v4" stroke="#333" fill="none"/></svg></button>
    <button aria-label="硬件加速"><svg viewBox="0 0 16 16"><circle cx="8" cy="8" r="6" fill="url(#gBall)"/><path d="m5 5 3 4 5-5" stroke="#eee" fill="none"/></svg></button>
    <button class="wide" aria-label="隔离对象"><svg viewBox="0 0 16 16"><path d="M1 1h9v7H1z" fill="#4f92c8"/><path d="M4 9h5v5H4z" fill="#e9c93a"/><path d="m12 6 4 8H8Z" fill="#f5d433" stroke="#865"/></svg><svg viewBox="0 0 16 16"><circle cx="8" cy="6" r="5" fill="#fbf0a0" stroke="#988030"/><path d="M6 11h4v4H6z" fill="#999"/></svg></button>
    <button class="slim" aria-label="状态栏菜单"><i class="caret dark"></i></button>
    <button aria-label="全屏"><svg viewBox="0 0 16 16"><path d="M1 2h14v12H1z" fill="#fff" stroke="#333"/><path d="M1 3h14" stroke="#333" stroke-width="2"/></svg></button>
  </div>
</div>

<footer class="taskbar">
  <button class="start" aria-label="开始"><svg viewBox="0 0 14 14"><path d="M0 2 6 1v5.500H0zM7 1l7-1v6.500H7zM0 7.500h6V13l-6-1zM7 7.500h7V14l-7-1z" fill="#fff"/></svg></button>
  <button class="task t1"><svg><use href="#mail"/></svg><span>网易闪电邮</span></button>
  <button class="task t2"><svg viewBox="0 0 20 20"><path d="M1 2 14 0l5 3v11l-5 3H1z" fill="#c3161c"/><path d="M8 4c-5-2-6 2-3 3 3 1 2 4-3 2M9 3l2 7 2-5 2 5 2-7" stroke="#fff" fill="none" stroke-width="1.600"/><text x="3" y="18" font-size="7" font-weight="700" fill="#fff">2016</text></svg><span>SOLIDWORKS Pr...</span></button>
  <button class="task t3"><svg viewBox="0 0 20 20"><path d="M5 1h9l5 5v13H5z" fill="#f5f3f3"/><path d="M1 1h12v6H1z" fill="#a71f27"/><path d="M7 17C11 13 12 9 11 7c3 5 5 7 7 7-4-1-8 0-11 3Z" stroke="#c9252d" fill="none" stroke-width="1.500"/></svg><span>K0617-018-0000-...</span></button>
  <button class="task t4"><svg viewBox="0 0 20 20"><path d="M0 0h20v20H0z" fill="#ee6c68"/><path d="M0 0h20L0 20Z" fill="#f7b2ab"/><path d="M4 16 9 4h3l4 12h-4l-1-3-4 1-1 2Z" fill="#7e0d10"/></svg><span>Autodesk AutoCA...</span></button>
  <button class="task t5"><svg viewBox="0 0 20 20"><circle cx="10" cy="10" r="9" fill="#6cc644" stroke="#d8f0c5"/><path d="M5 10h10c0-6-9-6-9 0 0 5 6 5 8 3" stroke="#fff" fill="none" stroke-width="2.500"/></svg><span>cad双击滚轮不居...</span></button>
  <button class="task t6"><svg><use href="#wechat"/></svg><span>范晓</span></button>
  <div class="tray">
    <button aria-label="网易闪电邮"><svg><use href="#mail"/></svg></button>
    <button aria-label="QQ"><svg viewBox="0 0 16 16"><ellipse cx="8" cy="4.500" rx="3" ry="3.500" fill="#eee"/><path d="M4 7h8l2 7H2Z" fill="#c8452d"/><path d="M5 10h6v5H5z" fill="#f1ddc0"/></svg></button>
    <button aria-label="微信"><svg><use href="#wechat"/></svg></button>
    <button aria-label="安全卫士"><svg viewBox="0 0 16 16"><circle cx="8" cy="8" r="7" fill="#f2d32e"/><path d="M1 8a7 7 0 0 1 14 0Z" fill="#53b531"/><path d="M8 4v8M4 8h8" stroke="#163" stroke-width="2.500"/></svg></button>
    <button aria-label="SolidWorks"><svg viewBox="0 0 16 16"><path d="M1 1h9v7H1z" fill="#d22"/><path d="m4 10 4 4 7-9" stroke="#3ba53b" stroke-width="3" fill="none"/></svg></button>
    <button aria-label="卫星"><svg viewBox="0 0 16 16"><path d="M2 1c8 0 12 5 13 11L8 14 3 9Z" fill="#1c1c1c" stroke="#ccc"/><path d="m2 15 4-4M1 6l5 5" stroke="#ddd"/></svg></button>
    <button aria-label="网络"><svg viewBox="0 0 16 16"><path d="M4 3h11v8H4M1 1v6h3V1zM7 14h7M10 11v3" stroke="#fff" fill="none" stroke-width="1.200"/></svg></button>
    <button aria-label="音量"><svg viewBox="0 0 16 16"><path d="M1 6h2l4-4v12l-4-4H1ZM10 6l4 4m0-4-4 4" stroke="#fff" fill="none" stroke-width="1.200"/></svg></button>
    <button class="lang">中</button>
    <button aria-label="搜狗输入法"><svg><use href="#sogou"/></svg></button>
  </div>
  <div class="clock"><span>上午 9:15</span><span>2017/6/22 星期四</span></div>
</footer>
</body>
</html>
```
FILE: styles.css
```css
* { box-sizing: border-box; }
body {
  margin: 0;
  height: 100vh;
  display: flex;
  flex-direction: column;
  overflow: hidden;
  background: #212730;
  font-family: "Noto Sans", "Noto Sans CJK SC", sans-serif;
  font-size: 10px;
  line-height: 14px;
  color: #333;
}
button, input, select {
  margin: 0;
  padding: 0;
  border: 0;
  background: none;
  font: inherit;
  color: inherit;
}
button {
  display: flex;
  align-items: center;
  justify-content: center;
}
a { color: inherit; text-decoration: none; white-space: nowrap; }
svg { width: 14px; height: 14px; flex: none; overflow: visible; }
.defs { position: absolute; width: 0; height: 0; }
.caret {
  width: 0;
  height: 0;
  flex: none;
  display: inline-block;
  border: 2px solid transparent;
  border-top: 3px solid #444;
  border-bottom: 0;
}
.caret.dark { border-width: 3px; border-bottom: 0; border-top: 4px solid #222; }
.caret.up { border-top: 0; border-bottom: 3px solid #444; }
.caret.line { box-shadow: 0 -2px #888; }

/* title bar */
.title-bar {
  height: 20px;
  flex: none;
  display: flex;
  position: relative;
  background: #fff;
}
.app-button {
  position: absolute;
  left: 0;
  top: 0;
  width: 34px;
  height: 34px;
  z-index: 2;
  background: linear-gradient(#c3c3c5, #858588);
  border: 1px solid #2c2c2e;
}
.app-button svg { width: 32px; height: 32px; }
.quick-access {
  width: 361px;
  padding-left: 41px;
  display: flex;
  align-items: center;
  gap: 6px;
  background: linear-gradient(#b5b3b6, #8d8b8e);
}
.workspace {
  flex: 1;
  height: 17px;
  margin-right: -6px;
  padding: 0 4px 0 3px;
  display: flex;
  align-items: center;
  gap: 2px;
  background: linear-gradient(#c9c8ca, #a9a8aa);
  border: 1px solid #777;
  color: #111;
}
.workspace select, .style-select select { flex: 1; appearance: none; height: 14px; line-height: 14px; }
.qat-more { width: 13px; height: 20px; background: #69676a; }
.caption {
  flex: 1;
  display: flex;
  align-items: center;
  justify-content: center;
  gap: 14px;
  font-family: Roboto, sans-serif;
  font-size: 11px;
  color: #222;
}
.info-center {
  width: 371px;
  padding-right: 3px;
  display: flex;
  align-items: center;
  gap: 5px;
  background: linear-gradient(#b5b3b6, #8d8b8e);
}
.info-toggle { width: 13px; height: 20px; background: #7d7b7e; }
.info-toggle svg { width: 8px; height: 8px; }
.info-center input {
  width: 149px;
  height: 17px;
  margin: 0 -1px 0 -5px;
  padding: 0 3px;
  background: #efeef0;
  border: 1px solid #777;
  font-style: italic;
}
.info-center input::placeholder { color: #555; opacity: 1; }
.sign-in { gap: 4px; color: #fff; }
.push { margin-left: auto; }
.divider { width: 1px; height: 14px; background: #777; margin-right: 5px; }
.help {
  width: 14px;
  height: 14px;
  border: 1px solid #345;
  border-radius: 50%;
  background: #e9eef7;
  color: #2a4ea0;
  font-size: 11px;
  font-weight: 700;
}
.window-buttons { width: 136px; padding-left: 18px; display: flex; }
.window-buttons button { flex: 1; }
.window-buttons svg, .doc-buttons svg { width: 10px; height: 10px; fill: none; stroke: #777; }

/* menus and ribbon tabs */
.menu-bar {
  height: 18px;
  flex: none;
  padding: 0 0 2px 46px;
  display: flex;
  align-items: center;
  gap: 21px;
  border-top: 1px solid #333;
  background: linear-gradient(#9a999b, #545355);
  color: #f3f3f3;
}
.doc-buttons { margin-left: auto; padding-right: 3px; display: flex; gap: 4px; }
.doc-buttons svg { stroke: #1d1d1f; }
.ribbon-tabs {
  height: 16px;
  flex: none;
  padding-left: 3px;
  display: flex;
  gap: 1px;
  background: #3f3d40;
  color: #eee;
}
.ribbon-tabs a { padding: 0 8px; line-height: 18px; }
.ribbon-tabs a.active { margin-top: 1px; background: linear-gradient(#b9b8ba, #f0eff1); color: #222; line-height: 16px; }
.ribbon-min { margin-left: 16px; }
.ribbon-min svg { width: 22px; height: 10px; }

/* ribbon */
.ribbon {
  height: 82px;
  flex: none;
  display: flex;
  border-bottom: 1px solid #eee;
  background: linear-gradient(#d3d1d4, #8f8d90);
}
.panel {
  display: flex;
  flex-direction: column;
  background: #fdfdfe;
  border-right: 1px solid #aaa;
}
.panel-body { flex: 1; display: flex; position: relative; padding: 4px 1px 0; min-height: 0; }
.panel h2 {
  position: relative;
  height: 14px;
  margin: 0;
  border-top: 1px solid #ccc;
  background: #f0eff1;
  font-size: 10px;
  font-weight: 400;
  line-height: 13px;
  text-align: center;
}
.panel h2 .caret { margin-left: 4px; vertical-align: 2px; }
.p-style h2, .p-ui h2 { padding-right: 9px; }
.corner {
  position: absolute;
  right: 5px;
  bottom: 4px;
  width: 5px;
  height: 5px;
  border: solid #555;
  border-width: 0 2px 2px 0;
}
.big {
  height: 60px;
  padding-top: 3px;
  flex-direction: column;
  justify-content: flex-start;
  gap: 3px;
  flex: none;
  white-space: nowrap;
}
.big svg { width: 26px; height: 26px; }
.big.off { color: #b5b5b5; }
.rows { display: flex; flex-direction: column; height: 60px; }
.rows button { height: 20px; justify-content: flex-start; gap: 4px; white-space: nowrap; }
.rows .caret { margin-left: 4px; }
.caret.mid { align-self: center; margin-top: 26px; }
.p-nav { width: 148px; }
.p-nav .big { width: 31px; margin-left: 3px; }
.p-nav .big + .big { margin-left: 0; }
.nav-rows { margin-left: 8px; }
.p-view { width: 150px; }
.view-list { width: 104px; height: 54px; margin-top: 4px; display: flex; justify-content: space-between; border: 1px solid #aaa; }
.view-list .rows { height: 52px; }
.view-list .rows button { height: 17px; gap: 2px; padding-left: 2px; }
.spin { width: 11px; display: flex; flex-direction: column; border-left: 1px solid #aaa; }
.spin button { flex: 1; border-bottom: 1px solid #ccc; background: #f3f3f3; }
.p-view .big { width: 42px; }
.p-style { width: 193px; }
.panel-body.style-body { flex-direction: column; gap: 3px; padding: 5px 2px 0; }
.style-select { width: 167px; height: 18px; padding: 0 4px 0 2px; display: flex; align-items: center; gap: 3px; border: 1px solid #bbb; background: #f2f1f3; }
.strip { display: flex; gap: 1px; width: 167px; }
.strip button { flex: 1 1 28px; height: 18px; gap: 3px; border: 1px solid #c5c5c7; background: #f3f3f5; }
.strip button:nth-child(2) { flex-basis: 20px; }
.opacity { display: flex; align-items: center; color: #ccc; }
.opacity button { width: 18px; height: 18px; border: 1px solid #bbb; background: #eee; }
.track { width: 144px; height: 16px; margin-left: 5px; padding-left: 4px; background: linear-gradient(90deg, #eeeef0 85px, #f8f8f9 85px); }
.value { width: 21px; height: 18px; padding: 1px 4px; border: 1px solid #eee; color: #bbb; }
.p-port { width: 92px; }
.p-port .big { width: 38px; }
.p-port .caret.mid { margin-left: -4px; }
.p-port .rows { margin-left: 9px; }
.p-port .rows button { gap: 3px; }
.p-palette { width: 253px; }
.p-palette .big { width: 34px; }
.tiles { display: grid; grid-template-columns: 20px; grid-auto-rows: 20px; }
.tiles.two { grid-template-columns: 20px 20px; margin-left: 2px; }
.tiles button { border: 1px solid #d0d0d2; background: #f6f6f8; }
.vline { width: 1px; height: 60px; margin: 0 7px 0 5px; background: #ccc; }
.material { width: 71px; }
.material button { gap: 3px; }
.p-palette .tiles:last-child { margin-left: 2px; }
.p-ui { width: 248px; }
.p-ui .big { width: 34px; }
.p-ui .big .caret { margin-top: 2px; }
.p-ui .caret.mid { margin-left: -4px; }
.p-ui .big.pressed { width: 56px; height: 61px; margin: 0 4px 0 2px; background: #a9caf0; border: 1px solid #6390c4; }
.p-ui .big:last-child { margin-left: 5px; }
.p-ui .vline { margin: 0 5px 0 8px; }

/* drawing tabs */
.file-tabs {
  height: 29px;
  flex: none;
  padding: 4px 13px 0;
  display: flex;
  gap: 4px;
  border-bottom: 5px solid #6d6a69;
  background: linear-gradient(#a19fa2, #918f92);
  box-shadow: inset 0 -1px #bbb;
}
.file-tab { width: 146px; position: relative; display: flex; align-items: center; gap: 8px; padding-left: 14px; color: #222; }
.file-tab a, .file-tab button { position: relative; }
.file-tab a { font-family: Roboto, sans-serif; font-size: 11px; }
.tab-shape { position: absolute; left: 0; top: 0; width: 100%; height: 100%; }
.file-tab button { font-size: 14px; color: #777; }
.new-tab svg { width: 20px; height: 14px; }

/* drawing area */
.canvas {
  flex: 1;
  min-height: 0;
  position: relative;
  background: #212730;
}
.canvas::after { content: ""; position: absolute; top: 0; right: 1px; bottom: 0; width: 1px; background: #d8d8d8; }
.drawing { display: block; width: 100%; height: 100%; }
.frame { fill: none; stroke: #d5d7d9; shape-rendering: crispEdges; }
.line { fill: none; stroke: #e3e5e7; }
.crisp { shape-rendering: crispEdges; }
.iso { stroke-width: 3; }
.cad { font-family: "Noto Sans CJK SC", sans-serif; font-size: 14px; font-weight: 300; fill: #e0e2e5; }
.cjk { font-family: "Noto Sans CJK SC", sans-serif; font-size: 8px; fill: #f8f8f8; }
.c10 { font-size: 10px; }
.c12 { font-size: 12px; }
.c13 { font-size: 13px; }
.solid { font-weight: 700; }
.view-label { position: absolute; left: 5px; top: 4px; display: flex; color: #ddd; }
.view-cube { position: absolute; right: 14px; top: 12px; width: 114px; height: 114px; }
.view-cube circle { fill: none; stroke: #424952; stroke-width: 11; }
.view-cube rect { fill: #a9a9ab; }
.view-cube .tint { fill: #9aa4ae; }
.view-cube text { font-size: 16px; fill: #a3a5a8; text-anchor: middle; }
.view-cube .face { font-size: 24px; fill: #566370; }
.wcs { position: absolute; right: 51px; top: 141px; width: 40px; height: 14px; border-radius: 3px; background: #8c8f99; color: #4d5158; gap: 4px; }
.wcs .caret { border-top-color: #777b84; }
.nav-bar {
  position: absolute;
  right: 5px;
  top: 176px;
  width: 27px;
  padding: 16px 0 15px;
  display: flex;
  flex-direction: column;
  align-items: center;
  gap: 14px;
  border-radius: 3px;
  background: #676b6e;
  color: #4b4f54;
}
.nav-bar button { position: relative; }
.nav-bar .near { margin-top: -11px; }
.nav-bar .more::after { content: ""; position: absolute; left: 9px; bottom: -8px; width: 2px; height: 2px; background: #42464b; }
.nav-bar svg { width: 20px; height: 20px; display: block; }
.ime {
  position: absolute;
  right: 41px;
  bottom: 97px;
  width: 161px;
  height: 20px;
  padding-left: 14px;
  display: flex;
  align-items: center;
  justify-content: space-around;
  background: #fff;
  color: #2a79c4;
  font-size: 13px;
  font-weight: 700;
}
.ime-logo { position: absolute; left: -12px; top: -2px; width: 24px; height: 22px; }
.ime .dim { color: #b9bccb; }

.context {
  position: absolute;
  left: 620px;
  top: 106px;
  width: 158px;
  margin: 0;
  padding: 2px 0;
  border: 1px solid #bbb;
  background: #f1f0f2;
  box-shadow: 2px 2px 2px #0006;
  list-style: none;
  color: #222;
}
.context button { width: 100%; height: 18px; padding: 0 8px 0 3px; justify-content: flex-start; gap: 11px; }
.context svg { fill: none; stroke: #3b4450; stroke-width: 1.2; }
.context .o { fill: #f6ede8; stroke: #dc6a3a; }
.context .sub { width: 8px; height: 8px; margin-left: auto; }
.sep { height: 1px; margin: 3px 3px 3px 26px; background: #d3d3d6; }

/* layout tabs and status bar */
.layout-tabs {
  height: 14px;
  flex: none;
  padding-left: 2px;
  display: flex;
  background: #f0eff1;
  color: #111;
  font-family: "Liberation Serif", "Noto Sans CJK SC", serif;
}
.layout-tabs button { width: 12px; border-right: 1px solid #bbb; }
.layout-tabs svg { width: 10px; height: 10px; fill: #666; }
.layout-tabs a { position: relative; padding: 0 7px; }
.layout-tabs a::after { content: ""; position: absolute; right: -1px; top: 0; width: 1px; height: 14px; background: #444; transform: skewX(-25deg); }
.layout-tabs .current { margin-right: 2px; padding: 0 9px; background: #212730; color: #fff; }
.status-bar {
  height: 19px;
  flex: none;
  display: flex;
  border-top: 1px solid #555;
  background: linear-gradient(#989699, #7b797c);
}
.status-bar output { width: 132px; padding: 2px 0 0 9px; font: 9px/15px "Liberation Mono", monospace; color: #111; white-space: pre; }
.toggles { display: flex; width: 275px; }
.toggles button { flex: 1; border: 1px solid #8c8b8e; background: #b0afb2; }
.toggles .on { background: #b3dbe9; border-color: #7fa4b2; }
.toggles .lite { background: #d5d4d7; }
.status-right { margin-left: auto; display: flex; padding-right: 3px; color: #111; }
.status-right button { width: 18px; border: 1px solid #777; background: #b0afb2; }
.status-right .text { width: 25px; }
.status-right .anno { width: 45px; margin-left: 16px; gap: 3px; }
.status-right .faded { color: #888; }
.status-right .apart { margin-left: 6px; }
.status-right .wide { width: 38px; gap: 5px; background: #c7c6b4; }
.status-right .slim { width: 14px; }

/* taskbar */
.taskbar {
  height: 33px;
  flex: none;
  display: flex;
  background:
    radial-gradient(ellipse at 50% 50%, #6a3a2a88, transparent 70%) 740px 4px / 90px 26px no-repeat,
    radial-gradient(ellipse at 50% 50%, #6d302c88, transparent 70%) 890px 0 / 50px 30px no-repeat,
    repeating-linear-gradient(115deg, #6a4a0c22 0 2px, transparent 2px 11px),
    repeating-linear-gradient(65deg, #2a1a0033 0 3px, transparent 3px 17px),
    linear-gradient(90deg, #3e2a02, #4e3503 50%, #402b04);
  color: #f1ece2;
  font-size: 11px;
}
.start { width: 40px; }
.task { width: 127px; margin-left: 7px; padding-left: 5px; justify-content: flex-start; gap: 4px; border-bottom: 2px solid #f1c588; white-space: nowrap; }
.task svg { width: 19px; height: 19px; }
.t1 { margin-left: 6px; }
.t4 { width: 134px; margin-left: 3px; padding-left: 8px; background: #8a5718; border-color: #8a5718; }
.t5 { margin-left: 5px; }
.tray { margin-left: auto; display: flex; align-items: center; gap: 6px; }
.tray .lang { width: 14px; font-size: 12px; }
.tray button:last-child { margin-left: 4px; }
.clock { width: 82px; margin: 0 9px 0 15px; display: flex; flex-direction: column; justify-content: center; text-align: center; white-space: nowrap; line-height: 16px; font-size: 10px; }
```
